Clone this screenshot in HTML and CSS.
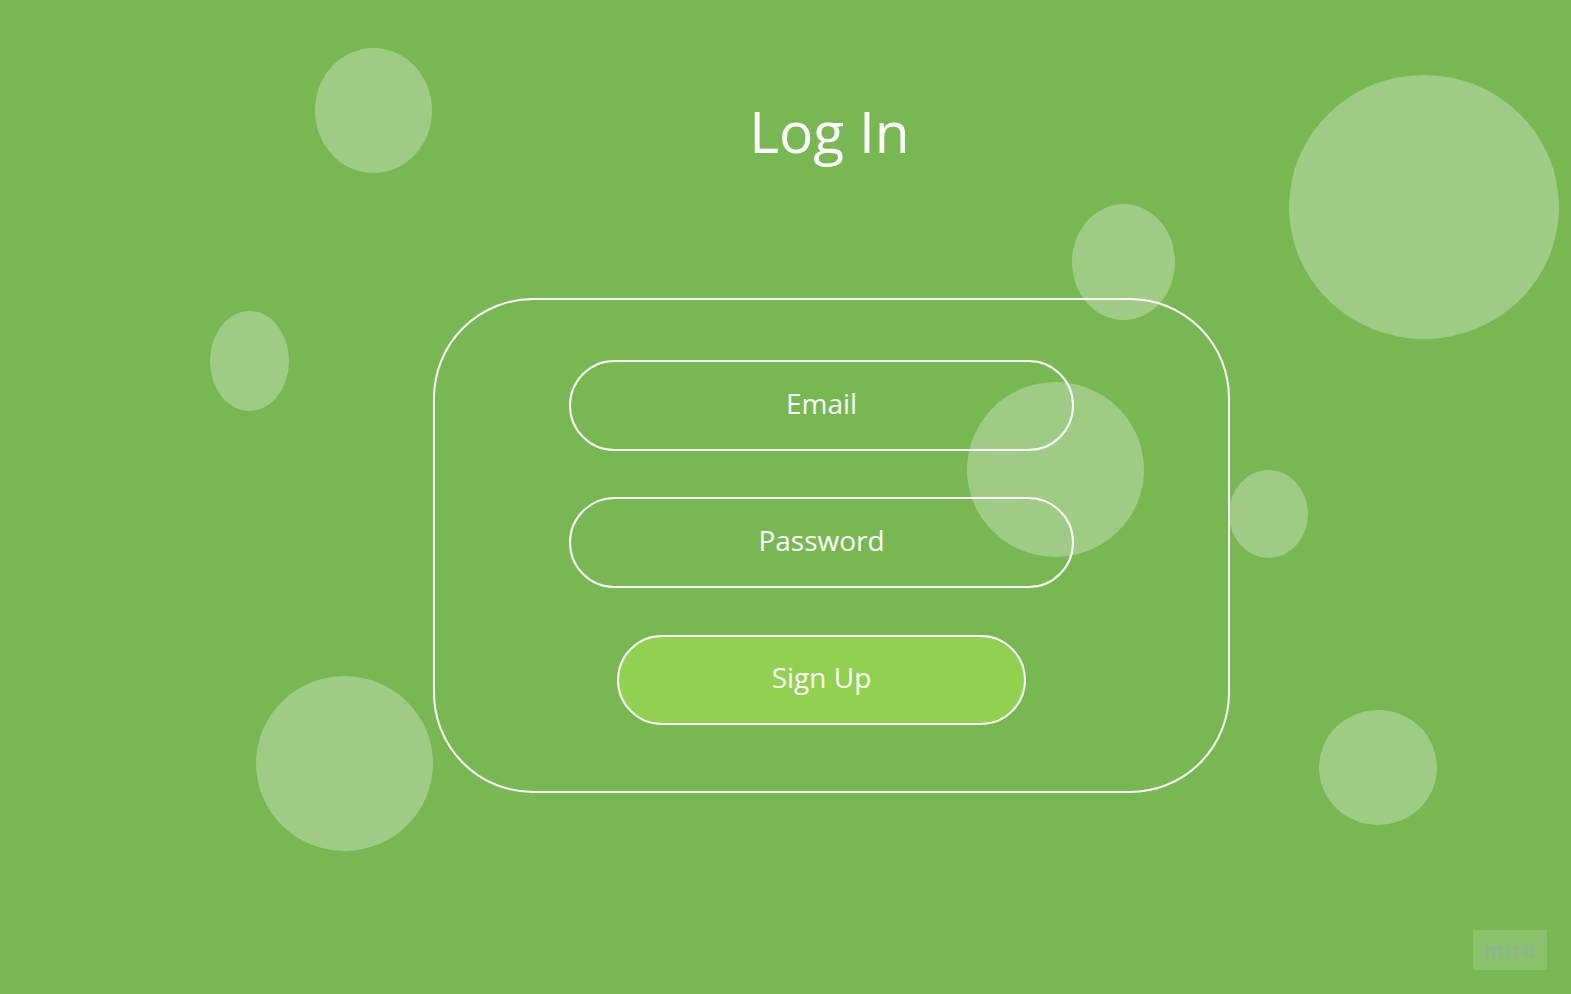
FILE: index.html
```html
<!DOCTYPE html>
<html lang="en">
<head>
<meta charset="utf-8">
<title>Log In</title>
<link rel="stylesheet" href="styles.css">
</head>
<body>
<div class="page">
  <div class="bubbles" aria-hidden="true">
    <span class="bubble b1"></span>
    <span class="bubble b2"></span>
    <span class="bubble b3"></span>
    <span class="bubble b4"></span>
    <span class="bubble b5"></span>
    <span class="bubble b6"></span>
    <span class="bubble b7"></span>
    <span class="bubble b8"></span>
  </div>
  <main class="content">
    <h1 class="title">Log In</h1>
    <form class="card">
      <div class="field">Email</div>
      <div class="field">Password</div>
      <button type="button" class="signup">Sign Up</button>
    </form>
  </main>
  <div class="miro">miro</div>
</div>
</body>
</html>
```
FILE: styles.css
```css
html, body {
  margin: 0;
  padding: 0;
}
body {
  background: #77b853;
  font-family: "Open Sans", "Noto Sans", sans-serif;
  color: #ffffff;
}
.page {
  position: relative;
  width: 1571px;
  height: 994px;
  overflow: hidden;
}
.bubbles {
  position: absolute;
  inset: 0;
  z-index: 0;
}
.bubble {
  position: absolute;
  display: block;
  border-radius: 50%;
  background: rgba(255, 255, 255, 0.29);
}
.b1 { left: 315px; top: 48px; width: 117px; height: 125px; }
.b2 { left: 1289px; top: 75px; width: 270px; height: 264px; }
.b3 { left: 1072px; top: 204px; width: 103px; height: 116px; }
.b4 { left: 210px; top: 311px; width: 79px; height: 100px; }
.b5 { left: 967px; top: 382px; width: 177px; height: 175px; }
.b6 { left: 1229px; top: 470px; width: 79px; height: 88px; }
.b7 { left: 256px; top: 676px; width: 177px; height: 175px; }
.b8 { left: 1319px; top: 710px; width: 118px; height: 115px; }

.content {
  position: relative;
  z-index: 1;
  display: flex;
  flex-direction: column;
  padding-top: 95px;
}
.title {
  margin: 0;
  padding-left: 88px;
  text-align: center;
  font-weight: 400;
  font-size: 57px;
  line-height: 72px;
  height: 72px;
}
.card {
  box-sizing: border-box;
  margin: 131px 0 0 433px;
  width: 797px;
  height: 495px;
  border: 2px solid #ffffff;
  border-radius: 100px;
  padding: 60px 0 0 134px;
  display: flex;
  flex-direction: column;
  align-items: flex-start;
}
.field {
  box-sizing: border-box;
  width: 505px;
  height: 91px;
  border: 2px solid #ffffff;
  border-radius: 46px;
  display: flex;
  align-items: center;
  justify-content: center;
  font-size: 28px;
  padding-bottom: 6px;
  margin-bottom: 46px;
}
.signup {
  box-sizing: border-box;
  margin: 1px 0 0 48px;
  width: 409px;
  height: 90px;
  border: 2px solid #ffffff;
  border-radius: 45px;
  background: #91d150;
  color: #ffffff;
  font-family: "Open Sans", "Noto Sans", sans-serif;
  font-size: 28px;
  padding: 0 0 6px 0;
}
.miro {
  position: absolute;
  z-index: 2;
  left: 1473px;
  top: 930px;
  width: 74px;
  height: 40px;
  background: rgba(255, 255, 255, 0.14);
  color: #8fb38f;
  font-family: "Noto Sans", sans-serif;
  font-weight: 700;
  font-size: 21px;
  letter-spacing: 1px;
  display: flex;
  align-items: center;
  justify-content: center;
}
```
